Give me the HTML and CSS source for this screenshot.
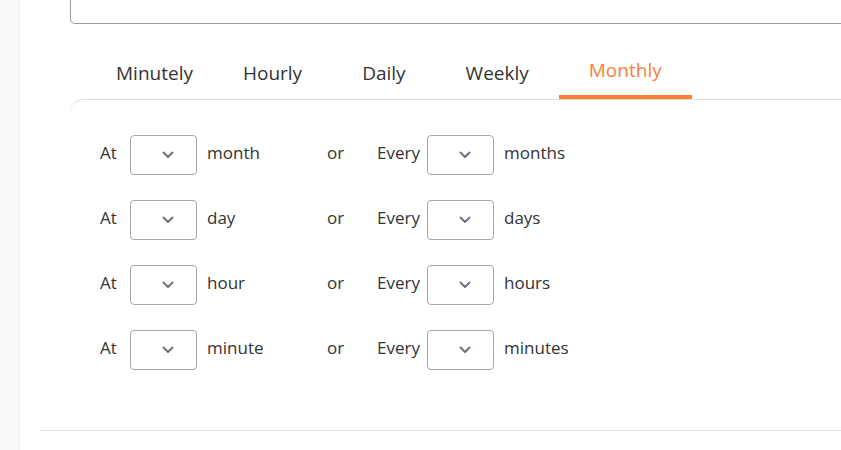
FILE: index.html
```html
<!DOCTYPE html>
<html lang="en">
<head>
<meta charset="utf-8">
<title>Cron Monthly</title>
<link rel="stylesheet" href="styles.css">
</head>
<body>
<div class="layout">
  <aside class="sidebar"></aside>
  <main class="main">
    <div class="expr-box"></div>
    <ul class="tabs">
      <li class="tab tab-first">Minutely</li>
      <li class="tab tab-second">Hourly</li>
      <li class="tab">Daily</li>
      <li class="tab">Weekly</li>
      <li class="tab active">Monthly</li>
    </ul>
    <section class="panel">
      <div class="grid">
        <span class="lbl">At</span>
        <div class="sel"><svg class="chev" width="12" height="8" viewBox="0 0 12 8"><path d="M1.5 1.5 L6 6 L10.5 1.5" fill="none" stroke="#6b7280" stroke-width="2" stroke-linecap="round" stroke-linejoin="round"/></svg></div>
        <span class="unit">month</span>
        <span class="lbl">or</span>
        <span class="lbl">Every</span>
        <div class="sel"><svg class="chev" width="12" height="8" viewBox="0 0 12 8"><path d="M1.5 1.5 L6 6 L10.5 1.5" fill="none" stroke="#6b7280" stroke-width="2" stroke-linecap="round" stroke-linejoin="round"/></svg></div>
        <span class="unit">months</span>

        <span class="lbl">At</span>
        <div class="sel"><svg class="chev" width="12" height="8" viewBox="0 0 12 8"><path d="M1.5 1.5 L6 6 L10.5 1.5" fill="none" stroke="#6b7280" stroke-width="2" stroke-linecap="round" stroke-linejoin="round"/></svg></div>
        <span class="unit">day</span>
        <span class="lbl">or</span>
        <span class="lbl">Every</span>
        <div class="sel"><svg class="chev" width="12" height="8" viewBox="0 0 12 8"><path d="M1.5 1.5 L6 6 L10.5 1.5" fill="none" stroke="#6b7280" stroke-width="2" stroke-linecap="round" stroke-linejoin="round"/></svg></div>
        <span class="unit">days</span>

        <span class="lbl">At</span>
        <div class="sel"><svg class="chev" width="12" height="8" viewBox="0 0 12 8"><path d="M1.5 1.5 L6 6 L10.5 1.5" fill="none" stroke="#6b7280" stroke-width="2" stroke-linecap="round" stroke-linejoin="round"/></svg></div>
        <span class="unit">hour</span>
        <span class="lbl">or</span>
        <span class="lbl">Every</span>
        <div class="sel"><svg class="chev" width="12" height="8" viewBox="0 0 12 8"><path d="M1.5 1.5 L6 6 L10.5 1.5" fill="none" stroke="#6b7280" stroke-width="2" stroke-linecap="round" stroke-linejoin="round"/></svg></div>
        <span class="unit">hours</span>

        <span class="lbl">At</span>
        <div class="sel"><svg class="chev" width="12" height="8" viewBox="0 0 12 8"><path d="M1.5 1.5 L6 6 L10.5 1.5" fill="none" stroke="#6b7280" stroke-width="2" stroke-linecap="round" stroke-linejoin="round"/></svg></div>
        <span class="unit">minute</span>
        <span class="lbl">or</span>
        <span class="lbl">Every</span>
        <div class="sel"><svg class="chev" width="12" height="8" viewBox="0 0 12 8"><path d="M1.5 1.5 L6 6 L10.5 1.5" fill="none" stroke="#6b7280" stroke-width="2" stroke-linecap="round" stroke-linejoin="round"/></svg></div>
        <span class="unit">minutes</span>
      </div>
    </section>
    <div class="footer-line"></div>
  </main>
</div>
</body>
</html>
```

FILE: styles.css
```css
html, body {
  margin: 0;
  padding: 0;
  background: #ffffff;
  overflow: hidden;
}
body {
  font-family: "Open Sans", "Noto Sans", sans-serif;
  color: #333333;
  width: 841px;
  height: 450px;
}
.layout {
  display: flex;
  height: 450px;
}
.sidebar {
  width: 20px;
  flex: 0 0 20px;
  background: #f9f9f9;
  box-shadow: inset -1px 0 0 #f1f1f1;
}
.main {
  flex: 1;
  min-width: 0;
  overflow: hidden;
}
.expr-box {
  height: 23px;
  margin-left: 50px;
  margin-right: -30px;
  border: 1px solid #9a9ca3;
  border-top: none;
  border-radius: 0 0 0 5px;
}
.tabs {
  list-style: none;
  margin: 0 0 0 50px;
  padding: 0 0 0 16px;
  display: flex;
  font-size: 19px;
  line-height: 24px;
}
.tab {
  padding: 37px 30px 10px;
  border-bottom: 4px solid transparent;
  color: #333333;
  white-space: nowrap;
}
.tab-first { padding-right: 25px; }
.tab-second { padding-left: 25px; }
.tab.active {
  color: #fd7e3c;
  padding-top: 34px;
  padding-bottom: 13px;
  border-bottom-color: #fd8037;
}
.panel {
  margin-left: 50px;
  margin-right: -30px;
  border-top: 1px solid #dcdcdc;
  border-top-left-radius: 14px;
  padding: 35px 0 60px 30px;
}
.grid {
  display: grid;
  grid-template-columns: 30px 67px 130px 50px 50px 67px auto;
  grid-auto-rows: 40px;
  row-gap: 25px;
  align-items: center;
  font-size: 17px;
}
.lbl, .unit {
  white-space: nowrap;
  line-height: 24px;
  padding-bottom: 4px;
}
.unit {
  padding-left: 10px;
}
.sel {
  border: 1px solid #a3a6ad;
  border-radius: 4px;
  display: flex;
  align-items: center;
  justify-content: flex-end;
  padding-right: 22px;
  box-sizing: border-box;
  height: 40px;
}
.chev {
  display: block;
}
.footer-line {
  margin-left: 20px;
  height: 1px;
  background: #e4e4e4;
}
```
